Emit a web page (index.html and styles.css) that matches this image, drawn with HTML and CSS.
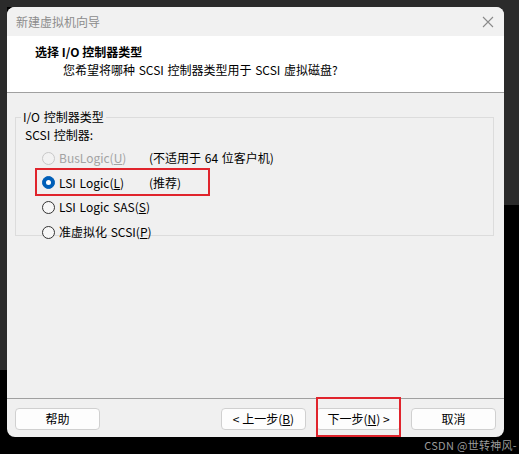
FILE: index.html
```html
<!DOCTYPE html>
<html lang="zh">
<head>
<meta charset="utf-8">
<title>新建虚拟机向导</title>
<link rel="stylesheet" href="styles.css">
</head>
<body>
<div class="window">
  <div class="titlebar">
    <span class="title">新建虚拟机向导</span>
    <svg class="close" width="12" height="12" viewBox="0 0 12 12"><path d="M1 1 L11 11 M11 1 L1 11" stroke="#8a8a8a" stroke-width="1.1" fill="none"/></svg>
  </div>
  <div class="header">
    <div class="heading">选择 I/O 控制器类型</div>
    <div class="subtitle">您希望将哪种 SCSI 控制器类型用于 SCSI 虚拟磁盘?</div>
  </div>
  <div class="content">
    <fieldset class="group">
      <legend>I/O 控制器类型</legend>
      <div class="label">SCSI 控制器:</div>
      <div class="options">
        <div class="opt disabled"><span class="radio"></span><span>BusLogic(<u>U</u>)</span></div>
        <div class="note">(不适用于 64 位客户机)</div>
        <div class="opt"><span class="radio checked"></span><span>LSI Logic(<u>L</u>)</span></div>
        <div class="note">(推荐)</div>
        <div class="opt"><span class="radio"></span><span>LSI Logic SAS(<u>S</u>)</span></div>
        <div class="note"></div>
        <div class="opt"><span class="radio"></span><span>准虚拟化 SCSI(<u>P</u>)</span></div>
        <div class="note"></div>
      </div>
      <div class="mark mark-lsi"></div>
    </fieldset>
  </div>
  <div class="footer">
    <button class="btn">帮助</button>
    <div class="spacer"></div>
    <button class="btn">&lt; 上一步(<u>B</u>)</button>
    <button class="btn">下一步(<u>N</u>) &gt;</button>
    <button class="btn">取消</button>
    <div class="mark mark-next"></div>
  </div>
</div>
<div class="watermark">CSDN @世转神风-</div>
</body>
</html>
```

FILE: styles.css
```css
html, body {
  margin: 0;
  padding: 0;
}
body {
  width: 519px;
  height: 454px;
  overflow: hidden;
  position: relative;
  box-sizing: border-box;
  padding: 7px 0 0 7px;
  font-family: "Noto Sans CJK SC", "Noto Sans", sans-serif;
  font-size: 12px;
  color: #000;
  background:
    linear-gradient(#2b2b2b, #2b2b2b) 0 0 / 7px 370px no-repeat,
    linear-gradient(#2b2b2b, #2b2b2b) 0 0 / 100% 7px no-repeat,
    linear-gradient(#2b2b2b, #2b2b2b) 100% 0 / 20px 205px no-repeat,
    #000;
}
.window {
  width: 497px;
  height: 430px;
  background: #f0f0f0;
  border-radius: 8px;
  overflow: hidden;
  display: flex;
  flex-direction: column;
}
.titlebar {
  height: 29px;
  flex: none;
  display: flex;
  align-items: center;
  justify-content: space-between;
  padding: 0 10px 0 9px;
  background: #f1f1f1;
}
.title {
  color: #8c8c8c;
  line-height: 14px;
}
.close {
  display: block;
}
.header {
  height: 56px;
  flex: none;
  background: #fff;
  border-bottom: 1px solid #a0a0a0;
  padding-left: 28px;
  box-sizing: content-box;
}
.heading {
  font-weight: bold;
  line-height: 14px;
  padding-top: 9px;
}
.subtitle {
  line-height: 14px;
  padding-top: 4px;
  padding-left: 28px;
  word-spacing: 1px;
}
.content {
  flex: 1;
  padding: 17px 10px 0 8px;
}
.group {
  position: relative;
  margin: 0;
  padding: 4px 0 0 0;
  border: 1px solid #dcdcdc;
  height: 126px;
  box-sizing: border-box;
}
.group legend {
  margin-left: 5px;
  padding: 0 2px;
  line-height: 14px;
  word-spacing: 1px;
}
.label {
  padding-left: 9px;
  line-height: 14px;
  word-spacing: 1px;
}
.options {
  display: grid;
  grid-template-columns: 107px auto;
  grid-auto-rows: 24.6px;
  padding: 4px 0 0 26px;
}
.opt, .note {
  display: flex;
  align-items: center;
  line-height: 14px;
  white-space: nowrap;
  word-spacing: 1px;
}
.opt {
  gap: 4px;
}
.disabled {
  color: #a3a3a3;
}
.radio {
  width: 11px;
  height: 11px;
  border: 1px solid #333;
  border-radius: 50%;
  background: #f7f7f7;
  flex: none;
  box-sizing: content-box;
  position: relative;
}
.disabled .radio {
  border-color: #c8c8c8;
  background: #f2f2f2;
}
.radio.checked {
  background: #005fb8;
  border-color: #005fb8;
}
.radio.checked::after {
  content: "";
  position: absolute;
  left: 3px;
  top: 3px;
  width: 5px;
  height: 5px;
  border-radius: 50%;
  background: #fff;
}
.mark {
  position: absolute;
  border: 2px solid #e0242c;
  box-sizing: border-box;
}
.mark-lsi {
  left: 19px;
  top: 44px;
  width: 175px;
  height: 28px;
}
.footer {
  position: relative;
  height: 39px;
  flex: none;
  border-top: 1px solid #a0a0a0;
  box-sizing: border-box;
  display: flex;
  align-items: flex-start;
  gap: 10px;
  padding: 9px 8px 0 8px;
}
.spacer {
  flex: 1;
}
.btn {
  width: 85px;
  height: 22px;
  background: #fdfdfd;
  border: 1px solid #d0d0d0;
  border-radius: 4px;
  font-family: "Noto Sans CJK SC", "Noto Sans", sans-serif;
  font-size: 12px;
  line-height: 14px;
  color: #000;
  padding: 0;
  margin: 0;
}
.mark-next {
  left: 309px;
  top: -2px;
  width: 85px;
  height: 40px;
}
.watermark {
  position: absolute;
  right: 2px;
  bottom: 3px;
  color: #9c9c9c;
  font-size: 11px;
  line-height: 12px;
  letter-spacing: 0.3px;
}
```
